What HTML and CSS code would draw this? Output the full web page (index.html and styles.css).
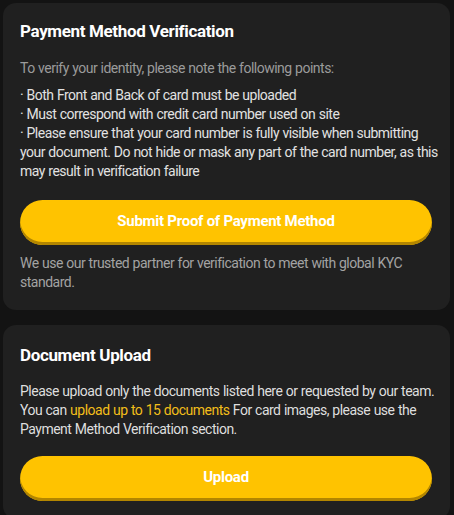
FILE: index.html
```html
<!DOCTYPE html>
<html lang="en">
<head>
<meta charset="utf-8">
<title>Verification</title>
<link rel="stylesheet" href="styles.css">
</head>
<body>
<div class="page">
  <section class="card card-first">
    <h2 class="title">Payment Method Verification</h2>
    <p class="intro">To verify your identity, please note the following points:</p>
    <ul class="points">
      <li>· Both Front and Back of card must be uploaded</li>
      <li>· Must correspond with credit card number used on site</li>
      <li>· Please ensure that your card number is fully visible when submitting your document. Do not hide or mask any part of the card number, as this may result in verification failure</li>
    </ul>
    <button class="btn btn-first">Submit Proof of Payment Method</button>
    <p class="note">We use our trusted partner for verification to meet with global KYC standard.</p>
  </section>
  <section class="card card-second">
    <h2 class="title">Document Upload</h2>
    <p class="body">Please upload only the documents listed here or requested by our team. You can <span class="hl">upload up to 15 documents</span> For card images, please use the Payment Method Verification section.</p>
    <button class="btn btn-second">Upload</button>
  </section>
</div>
</body>
</html>
```
FILE: styles.css
```css
html, body {
  margin: 0;
  padding: 0;
  background: #131313;
}
body {
  font-family: Roboto, "Noto Sans", "Liberation Sans", sans-serif;
  font-size: 14px;
  letter-spacing: -0.5px;
  word-spacing: 0.4px;
  line-height: 19px;
  color: #e2e2e2;
}
.page {
  display: flex;
  flex-direction: column;
  gap: 15px;
  padding: 3px 4px 0 3px;
}
.card {
  background: #202020;
  border-radius: 13px;
  padding: 17px 12px 18px 17px;
  display: flex;
  flex-direction: column;
}
.card-second {
  padding-top: 19px;
}
.title {
  margin: 0;
  font-size: 17px;
  letter-spacing: -0.35px;
  word-spacing: 0;
  line-height: 22px;
  font-weight: 700;
  color: #ffffff;
}
.intro {
  margin: 17px 0 0;
  color: #9b9b9b;
}
.points {
  list-style: none;
  margin: 8px 0 0;
  padding: 0;
}
.points li {
  margin: 0;
}
.btn {
  display: block;
  height: 45px;
  margin-right: 6px;
  border: none;
  border-radius: 23px;
  background: #ffc300;
  box-shadow: inset 0 -3px 0 #b38600;
  color: #ffffff;
  font-family: Roboto, "Noto Sans", "Liberation Sans", sans-serif;
  font-size: 15px;
  letter-spacing: -0.27px;
  word-spacing: 0;
  font-weight: 700;
  padding: 0 0 3px;
  cursor: pointer;
}
.btn-first {
  margin-top: 19px;
}
.btn-second {
  margin-top: 17px;
}
.note {
  margin: 9px 0 0;
  color: #a3a3a3;
}
.body {
  margin: 16px 0 0;
  color: #dedede;
}
.hl {
  color: #f2be1a;
}
```
